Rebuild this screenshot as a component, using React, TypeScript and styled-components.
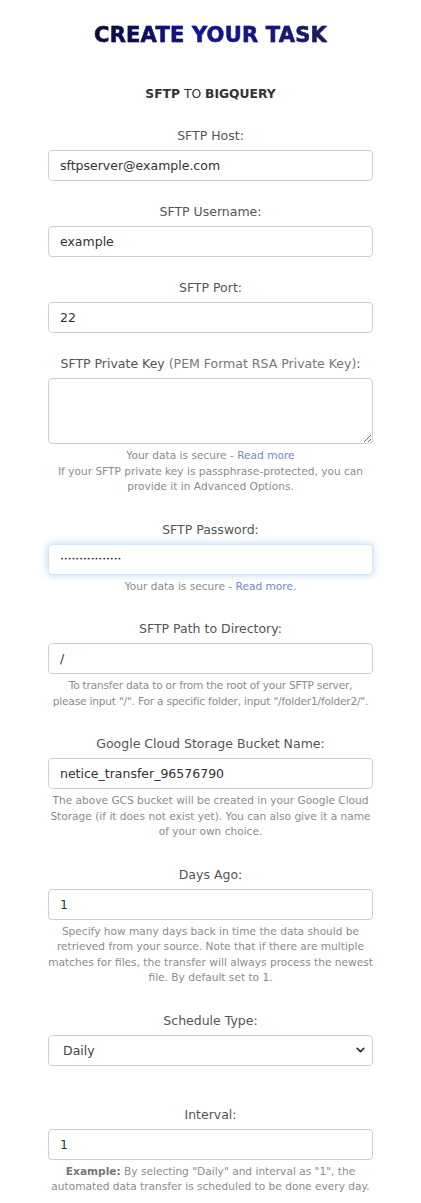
import React from "react";
import styled, { createGlobalStyle } from "styled-components";
import { ChevronDown } from "lucide-react";

const GlobalStyle = createGlobalStyle`
  html, body {
    margin: 0;
    padding: 0;
    background: #fff;
  }
  body {
    font-family: "DejaVu Sans", "Open Sans", sans-serif;
    color: #555;
  }
  * { box-sizing: border-box; }
`;

/* ── Page wrapper ───────────────────────────────── */
const Page = styled.main`
  width: 100%;
  padding: 22px 0 20px;
  display: flex;
  flex-direction: column;
  align-items: center;
`;

const Title = styled.h1`
  margin: 0;
  font-size: 21px;
  line-height: 26px;
  font-weight: 900;
  letter-spacing: 0.2px;
  background: linear-gradient(90deg, #0a0a33 0%, #141490 45%, #141490 62%, #1c1c55 100%);
  -webkit-background-clip: text;
  background-clip: text;
  color: transparent;
  -webkit-text-stroke: 0.5px rgba(20, 20, 110, 0.55);
`;

const Subtitle = styled.h2`
  margin: 38px 0 25px;
  font-size: 12.3px;
  line-height: 16px;
  font-weight: 400;
  color: #333;

  b {
    font-weight: 700;
  }
`;

/* ── Form ───────────────────────────────────────── */
const Form = styled.form`
  width: 325px;
  display: flex;
  flex-direction: column;
`;

const Group = styled.div<{ $gap?: number }>`
  display: flex;
  flex-direction: column;
  margin-bottom: ${({ $gap }) => $gap ?? 22}px;
`;

const Label = styled.label`
  display: block;
  text-align: center;
  font-size: 12.5px;
  line-height: 18px;
  color: #555;
  margin-bottom: 5px;

  span {
    color: #777;
  }
`;

const fieldBase = `
  width: 100%;
  border: 1px solid #cfcfcf;
  border-radius: 4px;
  background: #fff;
  font-family: "DejaVu Sans", "Open Sans", sans-serif;
  font-size: 12.5px;
  color: #333;
  outline: none;
`;

const Input = styled.input`
  ${fieldBase}
  height: 31px;
  padding: 0 11px;

  &:focus {
    border-color: #d6e6f5;
    box-shadow: 0 0 7px rgba(102, 165, 230, 0.45);
  }

  &[type="password"] {
    font-size: 6.5px;
    letter-spacing: 0;
  }
`;

const TextArea = styled.textarea`
  ${fieldBase}
  height: 66px;
  padding: 6px 11px;
  resize: vertical;
  display: block;
`;

const SelectWrap = styled.div`
  position: relative;
  width: 100%;

  svg {
    position: absolute;
    right: 6px;
    top: 50%;
    transform: translateY(-50%);
    color: #333;
    pointer-events: none;
  }
`;

const Select = styled.select`
  ${fieldBase}
  height: 31px;
  padding: 0 14px;
  appearance: none;
  -webkit-appearance: none;
  color: #444;
`;

const Help = styled.p<{ $tight?: boolean }>`
  margin: 4px 0 4px;
  text-align: center;
  font-size: 10.6px;
  line-height: 15.5px;
  color: #8c8c8c;
  letter-spacing: ${({ $tight }) => ($tight ? "-0.2px" : "0")};

  a {
    color: #7388c4;
    text-decoration: none;
  }

  b {
    font-weight: 800;
    color: #777;
  }
`;

type FieldProps = {
  label: React.ReactNode;
  help?: React.ReactNode;
  tight?: boolean;
  gap?: number;
  children: React.ReactNode;
};

const Field = ({ label, help, tight, gap, children }: FieldProps) => (
  <Group $gap={gap}>
    <Label>{label}</Label>
    {children}
    {help && <Help $tight={tight}>{help}</Help>}
  </Group>
);

export default function App() {
  return (
    <>
      <GlobalStyle />
      <Page>
        <Title>CREATE YOUR TASK</Title>
        <Subtitle>
          <b>SFTP</b> TO <b>BIGQUERY</b>
        </Subtitle>
        <Form onSubmit={(e) => e.preventDefault()}>
          <Field label="SFTP Host:">
            <Input defaultValue="sftpserver@example.com" />
          </Field>
          <Field label="SFTP Username:">
            <Input defaultValue="example" />
          </Field>
          <Field label="SFTP Port:">
            <Input defaultValue="22" />
          </Field>
          <Field
            label={
              <>
                SFTP Private Key <span>(PEM Format RSA Private Key)</span>:
              </>
            }
            help={
              <>
                Your data is secure - <a href="#">Read more</a>
                <br />
                If your SFTP private key is passphrase-protected, you can provide it in Advanced Options.
              </>
            }
          >
            <TextArea />
          </Field>
          <Field
            label="SFTP Password:"
            help={
              <>
                Your data is secure - <a href="#">Read more.</a>
              </>
            }
          >
            <Input type="password" defaultValue="................" autoFocus />
          </Field>
          <Field
            label="SFTP Path to Directory:"
            tight
            help={
              <>
                To transfer data to or from the root of your SFTP server,
                <br />
                please input "/". For a specific folder, input "/folder1/folder2/".
              </>
            }
          >
            <Input defaultValue="/" />
          </Field>
          <Field
            label="Google Cloud Storage Bucket Name:"
            help="The above GCS bucket will be created in your Google Cloud Storage (if it does not exist yet). You can also give it a name of your own choice."
          >
            <Input defaultValue="netice_transfer_96576790" />
          </Field>
          <Field
            label="Days Ago:"
            help="Specify how many days back in time the data should be retrieved from your source. Note that if there are multiple matches for files, the transfer will always process the newest file. By default set to 1."
          >
            <Input defaultValue="1" />
          </Field>
          <Field label="Schedule Type:" gap={40}>
            <SelectWrap>
              <Select defaultValue="daily">
                <option value="daily">Daily</option>
                <option value="weekly">Weekly</option>
                <option value="monthly">Monthly</option>
              </Select>
              <ChevronDown size={13} strokeWidth={3.2} />
            </SelectWrap>
          </Field>
          <Field
            label="Interval:"
            help={
              <>
                <b>Example:</b> By selecting "Daily" and interval as "1", the automated data transfer is scheduled to be done every day.
              </>
            }
          >
            <Input defaultValue="1" />
          </Field>
        </Form>
      </Page>
    </>
  );
}
